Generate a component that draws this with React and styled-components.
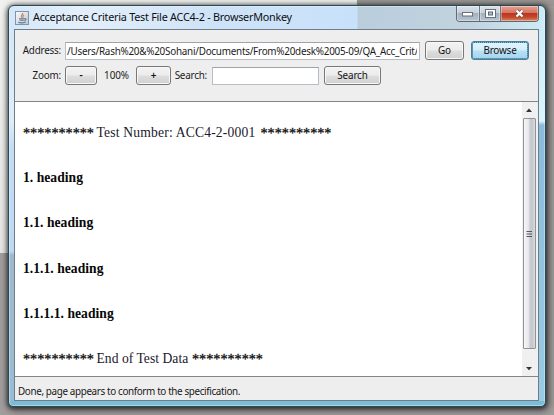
import React from "react";
import styled, { createGlobalStyle } from "styled-components";

const GlobalStyle = createGlobalStyle`
  * { box-sizing: border-box; }
  body { margin: 0; overflow: hidden; }
`;

const Desktop = styled.div`
  width: 554px;
  height: 415px;
  padding: 5px 8px 8px;
  font-family: "Noto Sans", "Open Sans", sans-serif;
  background:
    linear-gradient(90deg, transparent 357px, #9b9895 357px) 0 0 / 100% 6px no-repeat,
    linear-gradient(#f2f2f0, #e6e7e4) 0 0 / 357px 253px no-repeat,
    #a19e9d;
`;

const Window = styled.div`
  width: 538px;
  height: 402px;
  padding: 0 6px;
  display: flex;
  flex-direction: column;
  border: 1px solid #2b4a58;
  border-radius: 6px 6px 5px 5px;
  background:
    linear-gradient(90deg, #d5e7f8 0, #e4effa 70px, #cfe3f7 200px, #c8e1fa 348px, #bacddb 349px, #c2d3df 460px, #ccecf8 100%) 0 0 / 100% 25px no-repeat,
    linear-gradient(#d5e7f8 0, #e1edf9 90px, #c4dcf4 116px, #bfd9f3 220px, #9fb9cf 224px, #9abdd3 100%) 0 25px / 6px 370px no-repeat,
    linear-gradient(#ccecf8 0, #d9f6fd 90px, #8abbdc 94px, #9acbe4 100%) 100% 25px / 7px 370px no-repeat,
    #7dbcd7;
  box-shadow: inset 0 0 0 1px rgba(232, 250, 255, 0.4), 0 1px 4px 1px rgba(0, 0, 0, 0.6), 2px 2px 8px 2px rgba(0, 0, 0, 0.35);
`;

const TitleBar = styled.header`
  height: 23px;
  flex: none;
  display: flex;
  align-items: flex-start;
`;

const AppIcon = styled.svg`
  width: 14px;
  height: 14px;
  margin: 5px 5px 0 0;
  flex: none;
`;

const Title = styled.h1`
  margin: 2px 0 0 -1px;
  flex: 1;
  font-size: 10.8px;
  font-weight: 400;
  line-height: 18px;
  letter-spacing: ${(p) => p.$track}px;
  white-space: nowrap;
  color: #0c0f14;
`;

const WindowControls = styled.div`
  display: flex;
  width: 83px;
  height: 16px;
  border: 1px solid #5d6a76;
  border-top: 0;
  border-radius: 0 0 4px 4px;
  overflow: hidden;
`;

const Control = styled.button`
  width: ${(p) => p.$width}px;
  padding: 0;
  border: 0;
  border-right: ${(p) => (p.$close ? "0" : "1px solid #6b7783")};
  display: flex;
  align-items: center;
  justify-content: center;
  background: ${(p) =>
    p.$close
      ? "linear-gradient(#e4a393 0, #d47561 45%, #bd3520 50%, #c4482c 75%, #dd8a62 100%)"
      : "linear-gradient(#dbe3ea 0, #c5d0da 45%, #a4b2be 50%, #b7c5d0 100%)"};
  box-shadow: inset 0 0 0 1px rgba(255, 255, 255, 0.35);
`;

const Client = styled.main`
  width: 525px;
  height: 372px;
  display: flex;
  flex-direction: column;
  border: 1px solid #6f7d88;
  background: #eeeeee;
  margin-left: -1px;
`;

const Toolbar = styled.section`
  height: 71px;
  flex: none;
  padding-top: 11px;
  display: flex;
  flex-direction: column;
  gap: 6px;
`;

const ToolRow = styled.div`
  display: flex;
  align-items: center;
  height: 19px;
`;

const Label = styled.span`
  width: ${(p) => p.$width}px;
  flex: none;
  padding-right: ${(p) => p.$pad || 0}px;
  text-align: right;
  font-size: 9.9px;
  line-height: 17px;
  letter-spacing: ${(p) => p.$track ?? -0.22}px;
  white-space: nowrap;
  color: #1a1a1a;
`;

const Field = styled.div`
  width: ${(p) => p.$width}px;
  height: 18px;
  flex: none;
  padding: 0 2px 0 1px;
  border: 1px solid #b6bdc4;
  border-top-color: #9fa4aa;
  background: #fff;
`;

const FieldText = styled.div`
  overflow: hidden;
  white-space: nowrap;
  font-size: 9.9px;
  line-height: 16px;
  letter-spacing: -0.245px;
  color: #1a1a1a;
`;

const Button = styled.button`
  width: ${(p) => p.$width}px;
  height: 19px;
  flex: none;
  margin-left: ${(p) => p.$gap || 0}px;
  padding: 0 0 1px;
  border: 1px solid ${(p) => (p.$active ? "#4f7f9f" : "#777777")};
  border-radius: 3px;
  font-family: inherit;
  font-size: 9.9px;
  font-weight: ${(p) => (p.$strong ? 600 : 400)};
  line-height: 15px;
  letter-spacing: ${(p) => p.$track ?? -0.15}px;
  color: #111;
  background: ${(p) =>
    p.$active
      ? "linear-gradient(#e4f4fc 0, #d3edfa 48%, #b9e0f5 52%, #a5d3ec 100%)"
      : "linear-gradient(#f3f3f3 0, #ececec 48%, #dedede 52%, #d0d0d0 100%)"};
  box-shadow: inset 0 0 0 1px ${(p) => (p.$active ? "#68c4e8" : "#f8f8f8")};
  outline: ${(p) => (p.$active ? "1px dotted #48687a" : "none")};
  outline-offset: -2px;
`;

const Viewport = styled.section`
  height: 276px;
  flex: none;
  display: flex;
  border-top: 1px solid #858585;
  border-bottom: 1px solid #858585;
  background: #fff;
`;

const Page = styled.article`
  flex: 1;
  padding: 22px 0 0 8px;
  font-family: "Liberation Serif", "Times New Roman", serif;
  color: #21182b;
`;

const Line = styled.p`
  margin: 0;
  height: 45.2px;
  display: flex;
  font-size: 13.6px;
  line-height: 18px;
  white-space: nowrap;
`;

const Stars = styled.span`
  width: 73.5px;
  font-size: 14.2px;
  color: #111;
  -webkit-text-stroke: 0.3px #111;
`;

const Phrase = styled.span`
  width: ${(p) => p.$width}px;
  letter-spacing: ${(p) => p.$track}px;
`;

const Heading = styled.h2`
  margin: 0;
  height: 45.2px;
  font-size: 13.6px;
  line-height: 18px;
  letter-spacing: ${(p) => p.$track}px;
  color: #080808;
`;

const Scrollbar = styled.div`
  width: 16px;
  padding-right: 2px;
  display: flex;
  flex-direction: column;
  align-items: center;
  background: #f0f0f0;
`;

const ScrollArrow = styled.svg`
  width: 14px;
  height: ${(p) => p.$height}px;
  flex: none;
`;

const Thumb = styled.div`
  width: 13px;
  flex: 1;
  display: flex;
  align-items: center;
  justify-content: center;
  border: 1px solid #909499;
  border-radius: 1px;
  background: linear-gradient(90deg, #f7f7f7 0, #e8e8eb 40%, #cccdd3 52%, #c4c6cd 75%, #dcdde2 100%);
`;

const Status = styled.footer`
  flex: 1;
  padding: 5px 0 0 3px;
  font-size: 9.9px;
  line-height: 18px;
  letter-spacing: ${(p) => p.$track}px;
  white-space: nowrap;
  color: #161616;
`;

const headings = ["1. heading", "1.1. heading", "1.1.1. heading", "1.1.1.1. heading"];

export default function App() {
  return (
    <Desktop>
      <GlobalStyle />
      <Window>
        <TitleBar>
          <AppIcon viewBox="0 0 14 14">
            <defs>
              <linearGradient id="tile" x1="0" y1="0" x2="1" y2="1">
                <stop offset="0" stopColor="#fafbfc" />
                <stop offset="1" stopColor="#b9c6d3" />
              </linearGradient>
            </defs>
            <rect x="0.5" y="0.5" width="13" height="13" fill="url(#tile)" stroke="#7f95ad" />
            <path d="M7.8 2C8 3.6 5.3 3.9 6.8 6.8M9 4C7.2 4.9 8.4 5.5 7.7 6.8" fill="none" stroke="#d08658" strokeWidth="1.2" />
            <path d="M4 7.8h5.5M4.6 9.3h4.2M3.2 11.2c2 .8 5.5.6 7.4-.3M9.5 7.8c2.2-.5 1.7 1.5-.2 1.7" fill="none" stroke="#60748e" strokeWidth="1.1" />
          </AppIcon>
          <Title $track={-0.235}>Acceptance Criteria Test File ACC4-2 - BrowserMonkey</Title>
          <WindowControls>
            <Control $width={23} aria-label="Minimize">
              <svg width="11" height="6" viewBox="0 0 11 6">
                <rect x="0.5" y="1.5" width="10" height="3.5" fill="#fff" stroke="#66717d" />
              </svg>
            </Control>
            <Control $width={22} aria-label="Maximize">
              <svg width="11" height="9" viewBox="0 0 11 9">
                <rect x="0.5" y="0.5" width="10" height="8" fill="#fff" stroke="#66717d" />
                <rect x="3.5" y="3" width="4" height="3" fill="#b5c1cc" stroke="#596571" />
              </svg>
            </Control>
            <Control $width={37} $close aria-label="Close">
              <svg width="11" height="9" viewBox="0 0 11 9">
                <path d="M2.5 1.5l6 6M8.5 1.5l-6 6" stroke="#71504e" strokeWidth="3.6" />
                <path d="M2.5 1.5l6 6M8.5 1.5l-6 6" stroke="#fff" strokeWidth="2.2" />
              </svg>
            </Control>
          </WindowControls>
        </TitleBar>
        <Client>
          <Toolbar>
            <ToolRow>
              <Label $width={50} $pad={4}>Address:</Label>
              <Field $width={355}>
                <FieldText>/Users/Rash%20&amp;%20Sohani/Documents/From%20desk%2005-09/QA_Acc_Crit/A</FieldText>
              </Field>
              <Button $width={39} $gap={5}>Go</Button>
              <Button $width={58} $gap={7} $active>Browse</Button>
            </ToolRow>
            <ToolRow>
              <Label $width={50} $pad={4}>Zoom:</Label>
              <Button $width={32} $strong>-</Button>
              <Label $width={33} $pad={1} $track={-0.05}>100%</Label>
              <Button $width={35} $gap={6} $strong>+</Button>
              <Label $width={41} $pad={5}>Search:</Label>
              <Field $width={107} />
              <Button $width={57} $gap={5}>Search</Button>
            </ToolRow>
          </Toolbar>
          <Viewport>
            <Page>
              <Line>
                <Stars>**********</Stars>
                <Phrase $width={164} $track={0.18}>Test Number: ACC4-2-0001</Phrase>
                <Stars>**********</Stars>
              </Line>
              {headings.map((h) => (
                <Heading key={h} $track={0.03}>{h}</Heading>
              ))}
              <Line>
                <Stars>**********</Stars>
                <Phrase $width={95.5} $track={0.03}>End of Test Data</Phrase>
                <Stars>**********</Stars>
              </Line>
            </Page>
            <Scrollbar>
              <ScrollArrow $height={16} viewBox="0 0 14 16">
                <path d="M4 10h6L7 6.5z" fill="#333" />
              </ScrollArrow>
              <Thumb>
                <svg width="7" height="8" viewBox="0 0 7 8">
                  <path d="M0.5 1.5h5.5M0.5 4h5.5M0.5 6.5h5.5" stroke="#55585e" />
                </svg>
              </Thumb>
              <ScrollArrow $height={27} viewBox="0 0 14 27">
                <path d="M4 18h6l-3 3.3z" fill="#333" />
              </ScrollArrow>
            </Scrollbar>
          </Viewport>
          <Status $track={-0.37}>Done, page appears to conform to the specification.</Status>
        </Client>
      </Window>
    </Desktop>
  );
}
